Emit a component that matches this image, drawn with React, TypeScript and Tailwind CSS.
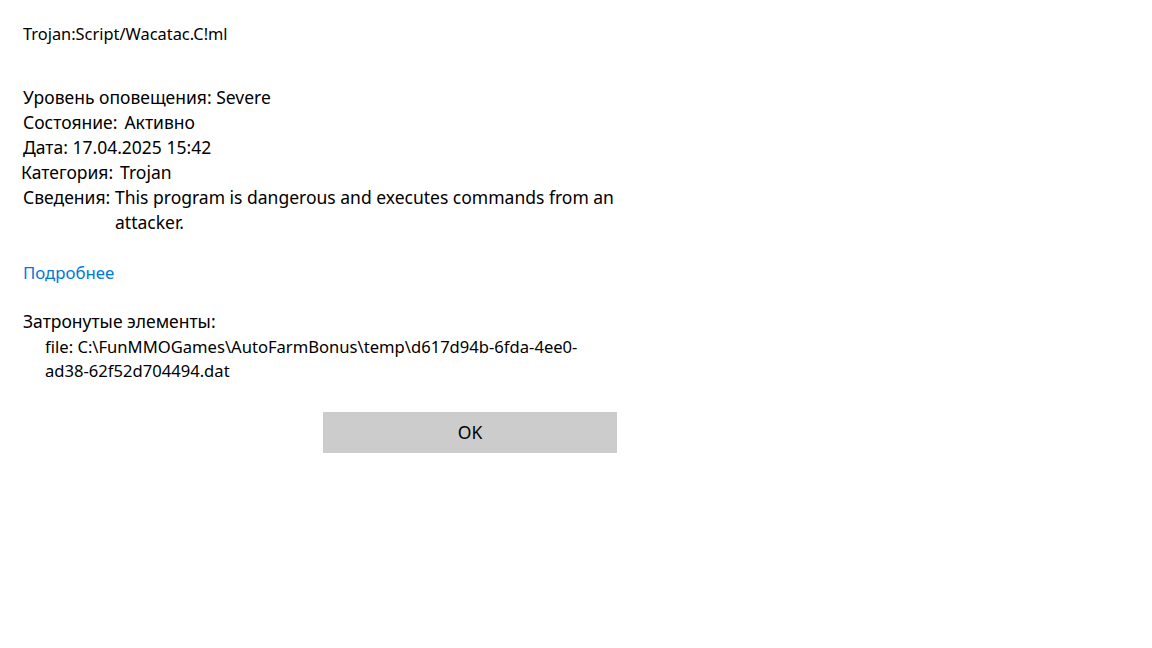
import React from "react";

const App: React.FC = () => {
  return (
    <div
      className="w-[1152px] h-[648px] bg-white text-black"
      style={{ fontFamily: '"Noto Sans", "Open Sans", sans-serif' }}
    >
      <div className="w-[594px] ml-[23px] pt-[22px]">
        <h1 className="text-[16.4px] leading-[24px] font-normal">
          Trojan:Script/Wacatac.C!ml
        </h1>

        <div className="mt-[39px] text-[17.5px] leading-[25px]">
          <p>Уровень оповещения: Severe</p>
          <p>
            Состояние:<span className="ml-[7px]">Активно</span>
          </p>
          <p>Дата: 17.04.2025 15:42</p>
          <p className="-ml-[2px]">
            Категория:<span className="ml-[7px]">Trojan</span>
          </p>
          <div className="flex">
            <span className="w-[92px] shrink-0">Сведения:</span>
            <span>
              This program is dangerous and executes commands from an attacker.
            </span>
          </div>
        </div>

        <a className="block mt-[25px] text-[16.8px] leading-[25px] text-[#0078d7]">
          Подробнее
        </a>

        <div className="mt-[24px] text-[17.5px] leading-[25px]">
          <p>Затронутые элементы:</p>
          <p className="pl-[22px] pt-[1px] text-[16.6px] leading-[24px] w-[560px] break-words">
            file: C:\FunMMOGames\AutoFarmBonus\temp\d617d94b-6fda-4ee0-ad38-62f52d704494.dat
          </p>
        </div>

        <div className="flex justify-end mt-[29px]">
          <button className="w-[294px] h-[41px] bg-[#cccccc] text-[17.5px]">
            OK
          </button>
        </div>
      </div>
    </div>
  );
};

export default App;
